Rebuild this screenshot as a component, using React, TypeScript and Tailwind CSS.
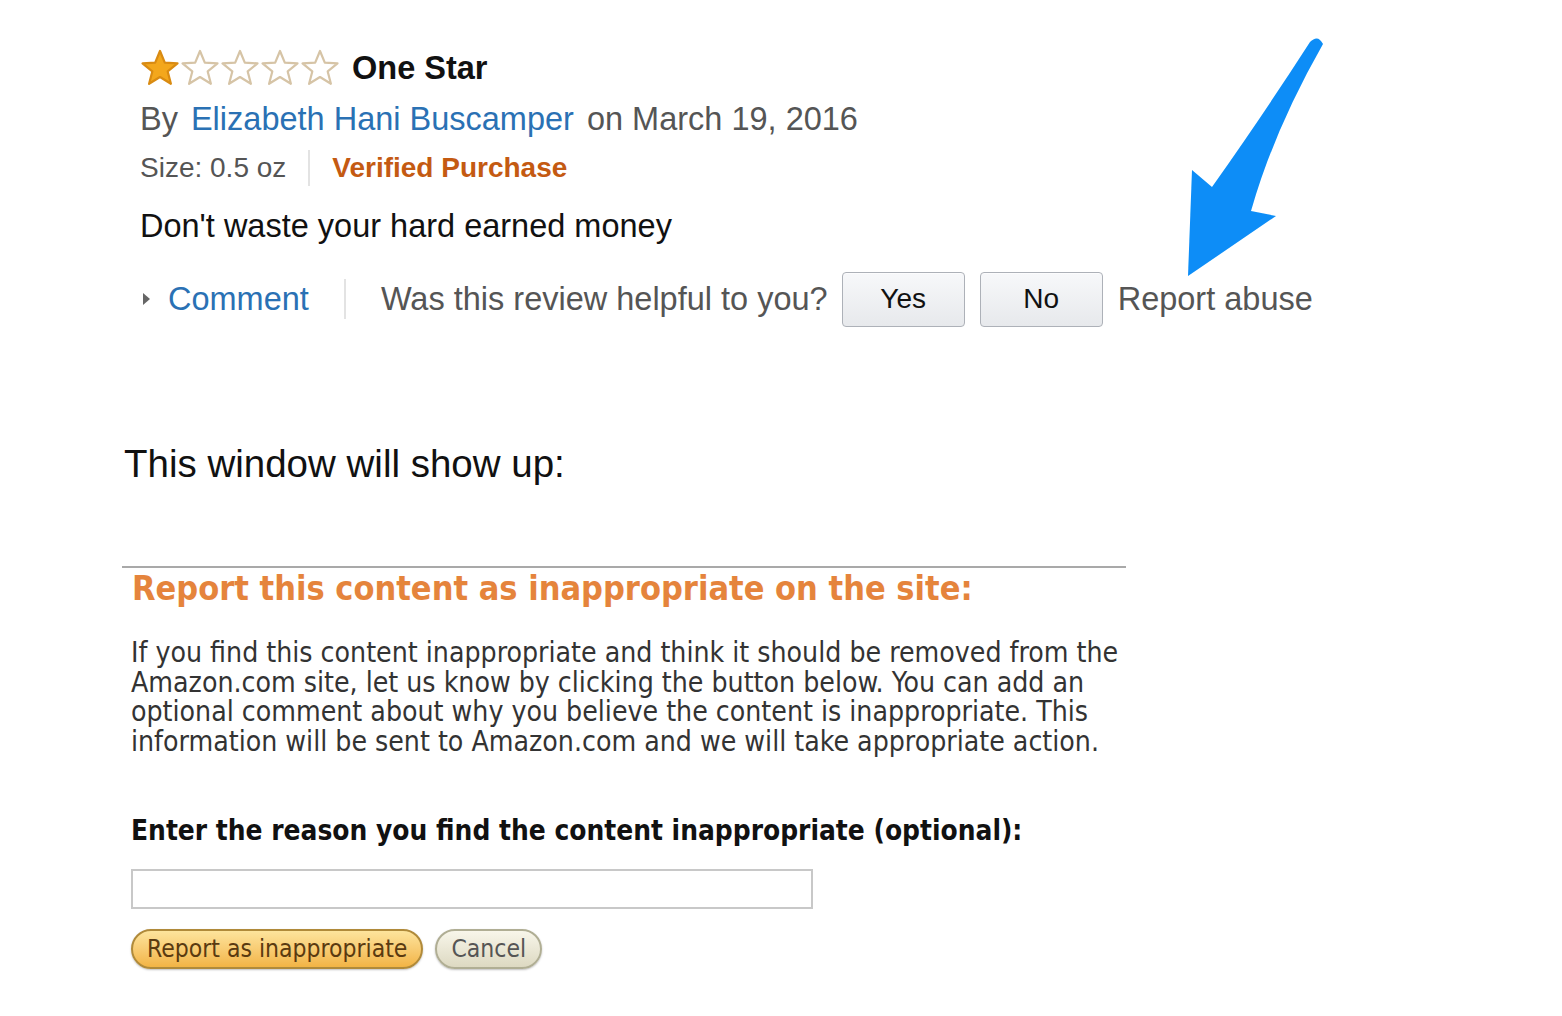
import { ReactNode } from 'react'

const arial = "font-['Liberation_Sans',Arial,sans-serif]"
const verdana = "font-['DejaVu_Sans_Condensed','DejaVu_Sans',Verdana,sans-serif]"

function Star({ filled }: { filled?: boolean }) {
  return (
    <svg width="40" height="38" viewBox="0 0 40 38">
      <path
        d="M20 2 L24.8 13.6 L37.5 14.4 L27.7 22.4 L30.9 34.8 L20 28 L9.1 34.8 L12.3 22.4 L2.5 14.4 L15.2 13.6 Z"
        fill={filled ? '#f3a71c' : '#ffffff'}
        stroke={filled ? '#d98b12' : '#d6c4a6'}
        strokeWidth="2.2"
        strokeLinejoin="round"
      />
    </svg>
  )
}

function GrayButton({ children }: { children: ReactNode }) {
  return (
    <button className="h-[55px] w-[123px] rounded-[4px] border border-[#adb1b8] bg-gradient-to-b from-[#f7f8fa] to-[#e7e9ec] text-[28px] text-[#111] shadow-[0_1px_0_rgba(255,255,255,0.6)_inset]">
      {children}
    </button>
  )
}

function Arrow() {
  return (
    <svg className="absolute left-[1170px] top-[30px]" width="170" height="260" viewBox="0 0 170 260">
      <defs>
        <filter id="soft" x="-10%" y="-10%" width="120%" height="120%">
          <feGaussianBlur stdDeviation="0.6" />
        </filter>
      </defs>
      <path
        d="M18 246 L22 140 L42 157 Q95 82 140 12 Q148 4 153 14 Q104 100 81 181 L106 186 Z"
        fill="#0a8df7"
        filter="url(#soft)"
      />
    </svg>
  )
}

export default function App() {
  return (
    <div className={`relative min-h-[1016px] w-[1562px] bg-white ${arial}`}>
      {/* review */}
      <div className="pl-[140px] pt-[48px]">
        <div className="flex h-[40px] items-center">
          <div className="flex">
            <Star filled />
            <Star />
            <Star />
            <Star />
            <Star />
          </div>
          <span className="ml-[12px] text-[32.5px] font-bold text-[#111]">One Star</span>
        </div>
        <div className="mt-[11px] flex h-[40px] items-center text-[32.5px] text-[#555]">
          <span>By</span>
          <span className="ml-[13px] text-[#2a71b4]">Elizabeth Hani Buscamper</span>
          <span className="ml-[13px]">on March 19, 2016</span>
        </div>
        <div className="mt-[9px] flex h-[40px] items-center text-[28px]">
          <span className="text-[#555]">Size: 0.5 oz</span>
          <span className="mx-[22px] h-[36px] w-[2px] bg-[#e3e3e3]" />
          <span className="font-bold text-[#c45a12]">Verified Purchase</span>
        </div>
        <div className="mt-[18px] flex h-[40px] items-center text-[32.5px] text-[#111]">
          Don't waste your hard earned money
        </div>
        <div className="mt-[25px] flex h-[56px] items-center text-[32.5px]">
          <span className="ml-[3px] mr-[18px] h-0 w-0 border-y-[6px] border-l-[7px] border-y-transparent border-l-[#666]" />
          <span className="text-[#2a71b4]">Comment</span>
          <span className="mx-[35px] h-[40px] w-[2px] bg-[#e3e3e3]" />
          <span className="mr-[14px] text-[#555]">Was this review helpful to you?</span>
          <GrayButton>Yes</GrayButton>
          <span className="w-[15px]" />
          <GrayButton>No</GrayButton>
          <span className="ml-[15px] text-[#555]">Report abuse</span>
        </div>
      </div>

      <p className="ml-[124px] mt-[114px] text-[38.5px] leading-[46px] text-[#111]">This window will show up:</p>

      {/* report dialog */}
      <div className={`ml-[122px] mt-[79px] w-[1004px] border-t-2 border-[#a9a9a9] ${verdana}`}>
        <h2 className="mt-[2px] pl-[10px] text-[34px] font-bold leading-[36px] text-[#e5843c]">
          Report this content as inappropriate on the site:
        </h2>
        <p className="mt-[32px] pl-[9px] text-[28.2px] leading-[29.5px] text-[#333]">
          If you find this content inappropriate and think it should be removed from the Amazon.com site, let us know by
          clicking the button below. You can add an optional comment about why you believe the content is inappropriate.
          This information will be sent to Amazon.com and we will take appropriate action.
        </p>
        <p className="mt-[60px] pl-[9px] text-[27.8px] font-bold leading-[30px] text-[#111]">
          Enter the reason you find the content inappropriate (optional):
        </p>
        <div className="mt-[23px] ml-[9px] h-[40px] w-[682px] border-2 border-[#c8c8c8] bg-white" />
        <div className="mt-[20px] ml-[9px] flex items-center gap-[12px]">
          <button className="h-[40px] rounded-full border-2 border-[#b08a3a] bg-gradient-to-b from-[#fde49c] to-[#f2b444] px-[14px] text-[24.5px] leading-none text-[#5a3a10] shadow-[0_1px_2px_rgba(0,0,0,0.25)]">
            Report as inappropriate
          </button>
          <button className="h-[40px] rounded-full border-2 border-[#b0ae94] bg-gradient-to-b from-[#f8f6ea] to-[#ddd9c2] px-[14px] text-[24.5px] leading-none text-[#555] shadow-[0_1px_2px_rgba(0,0,0,0.25)]">
            Cancel
          </button>
        </div>
      </div>

      <Arrow />
    </div>
  )
}
